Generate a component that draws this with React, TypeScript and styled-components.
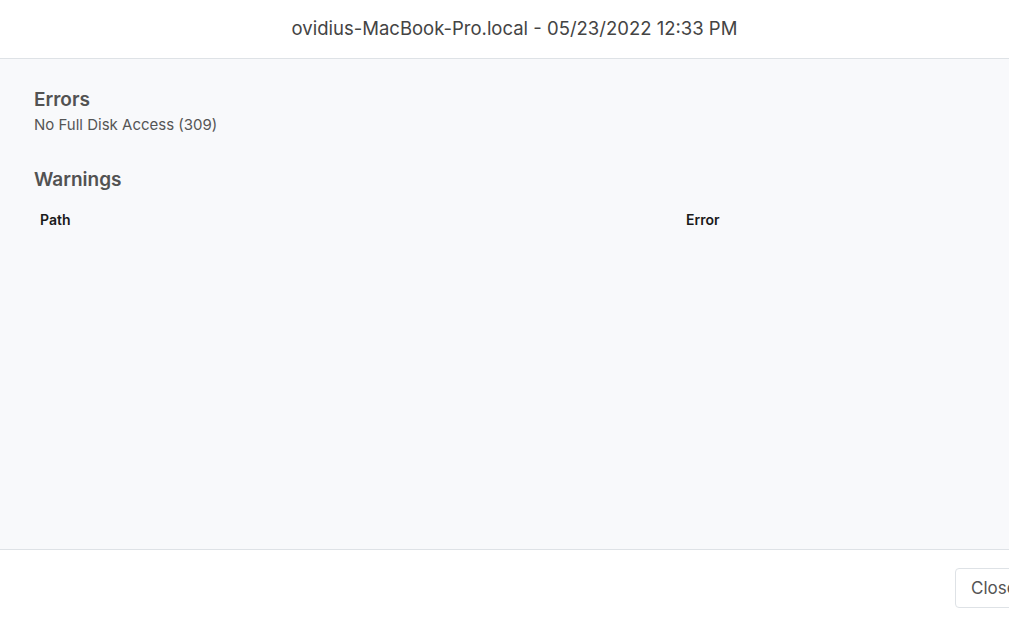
import styled, { createGlobalStyle } from 'styled-components';

const GlobalStyle = createGlobalStyle`
  html, body {
    margin: 0;
    padding: 0;
    background: #ffffff;
    overflow: hidden;
  }
  body {
    font-family: Inter, "Noto Sans", "Liberation Sans", sans-serif;
  }
`;

const Modal = styled.div`
  width: 1029px;
  height: 617px;
  display: flex;
  flex-direction: column;
  background: #ffffff;
`;

const Header = styled.header`
  height: 58px;
  flex-shrink: 0;
  display: flex;
  align-items: center;
  justify-content: center;
  padding-bottom: 2px;
  box-sizing: border-box;
  border-bottom: 1px solid #dee2e6;
  height: 59px;
`;

const Title = styled.h1`
  margin: 0;
  font-size: 18.5px;
  font-weight: 400;
  color: #444;
`;

const Body = styled.main`
  height: 491px;
  flex-shrink: 0;
  box-sizing: border-box;
  padding: 30px 34px;
  background: #f8f9fb;
  border-bottom: 1px solid #dee2e6;
`;

const Section = styled.section<{ $gap?: number }>`
  margin-top: ${(p) => p.$gap ?? 0}px;
`;

const SectionTitle = styled.h2`
  margin: 0;
  font-size: 19px;
  font-weight: 600;
  line-height: 22px;
  color: #525252;
`;

const SectionText = styled.p`
  margin: 4px 0 0;
  font-size: 15px;
  line-height: 20px;
  color: #555;
`;

const Table = styled.div`
  margin-top: 14px;
  display: grid;
  grid-template-columns: 646px 1fr;
`;

const HeadCell = styled.div`
  padding: 6px;
  font-size: 14px;
  font-weight: 600;
  line-height: 18px;
  color: #1a1a1a;
`;

const Footer = styled.footer`
  flex: 1;
  display: flex;
  justify-content: flex-end;
  align-items: flex-start;
  padding: 18px 0 0 955px;
  box-sizing: border-box;
`;

const Button = styled.button`
  height: 40px;
  width: 74px;
  flex-shrink: 0;
  padding: 0 15px;
  background: #ffffff;
  border: 1px solid #dee2e6;
  border-radius: 4px;
  font-family: inherit;
  font-size: 17px;
  color: #555;
  text-align: left;
`;

export default function App() {
  return (
    <>
      <GlobalStyle />
      <Modal>
        <Header>
          <Title>ovidius-MacBook-Pro.local - 05/23/2022 12:33 PM</Title>
        </Header>
        <Body>
          <Section>
            <SectionTitle>Errors</SectionTitle>
            <SectionText>No Full Disk Access (309)</SectionText>
          </Section>
          <Section $gap={34}>
            <SectionTitle>Warnings</SectionTitle>
            <Table>
              <HeadCell>Path</HeadCell>
              <HeadCell>Error</HeadCell>
            </Table>
          </Section>
        </Body>
        <Footer>
          <Button>Close</Button>
        </Footer>
      </Modal>
    </>
  );
}
